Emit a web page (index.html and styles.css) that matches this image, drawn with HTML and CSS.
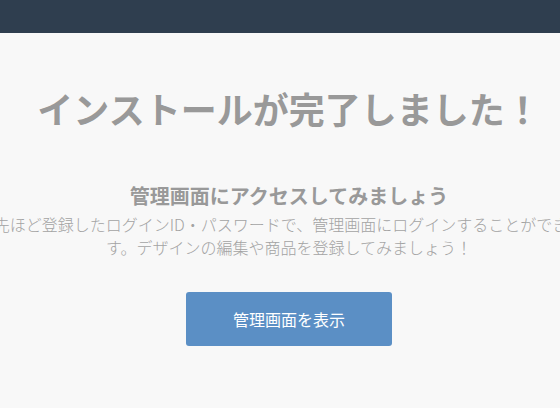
FILE: index.html
```html
<!DOCTYPE html>
<html lang="ja">
<head>
    <meta charset="UTF-8">
    <title>インストール完了</title>
    <link rel="stylesheet" href="styles.css">
</head>
<body>
    <div class="topbar"></div>
    <div class="content">
        <h1>インストールが完了しました！</h1>
        <h2>管理画面にアクセスしてみましょう</h2>
        <p class="lead">先ほど登録したログインID・パスワードで、管理画面にログインすることができます。デザインの編集や商品を登録してみましょう！</p>
        <a href="#" class="admin-button">管理画面を表示</a>
    </div>
</body>
</html>
```

FILE: styles.css
```css
body {
    margin: 0;
    background-color: #f8f8f8;
    font-family: "Noto Sans CJK JP", "Noto Sans", sans-serif;
    overflow: hidden;
}

.topbar {
    height: 33px;
    background-color: #2f3e4f;
}

/* main column, centred a little right of the window */
.content {
    display: flex;
    flex-direction: column;
    align-items: center;
    padding: 50px 0 0 18px;
}

h1 {
    margin: 0;
    font-size: 36px;
    line-height: 50px;
    font-weight: 700;
    color: #999;
}

h2 {
    margin: 49px 0 0;
    font-size: 20px;
    line-height: 28px;
    font-weight: 700;
    color: #999;
}

.lead {
    width: 600px;
    flex-shrink: 0;
    margin: 3px 0 0;
    font-size: 16px;
    line-height: 23px;
    font-weight: 300;
    text-align: center;
    color: #a3a3a3;
}

.admin-button {
    display: flex;
    justify-content: center;
    align-items: center;
    width: 206px;
    height: 54px;
    margin-top: 33px;
    background-color: #5b8fc5;
    border-radius: 3px;
    color: #fff;
    font-size: 16px;
    text-decoration: none;
}
```
